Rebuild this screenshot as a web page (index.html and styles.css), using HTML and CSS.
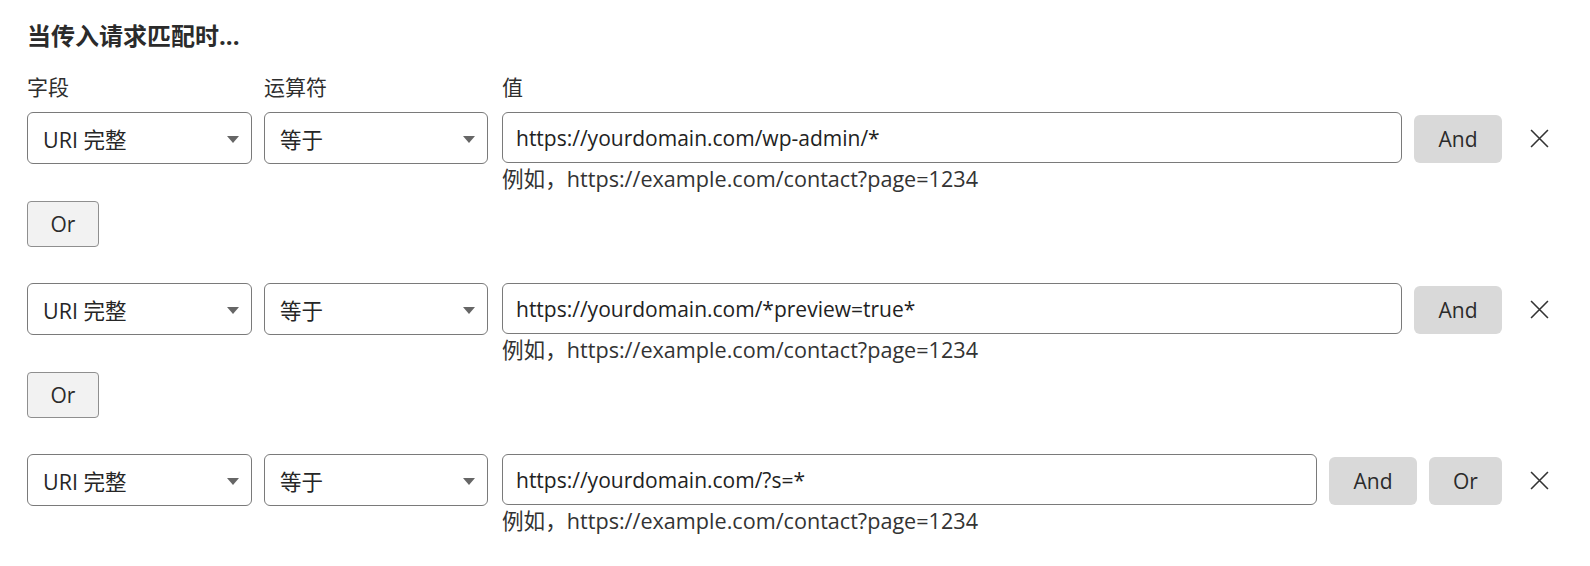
FILE: index.html
```html
<!DOCTYPE html>
<html lang="zh-CN">
<head>
<meta charset="utf-8">
<title>当传入请求匹配时</title>
<link rel="stylesheet" href="styles.css">
</head>
<body>
<div class="page">
  <h2 class="title">当传入请求匹配时...</h2>

  <div class="group">
    <div class="label">字段</div>
    <div class="label">运算符</div>
    <div class="label value-col">值</div>
    <div></div><div></div>

    <div class="select"><span>URI 完整</span><i class="caret"></i></div>
    <div class="select narrow"><span>等于</span><i class="caret"></i></div>
    <div class="input value-col">https://yourdomain.com/wp-admin/*</div>
    <div class="btns"><button class="btn gray and">And</button></div>
    <button class="close" aria-label="删除"><svg viewBox="0 0 18 18" width="19" height="19"><path d="M1 1L17 17M17 1L1 17" stroke="#333" stroke-width="1.5" fill="none"/></svg></button>

    <div class="hint value-col">例如，https://example.com/contact?page=1234</div>
  </div>
  <button class="btn or-btn">Or</button>

  <div class="group">
    <div class="select"><span>URI 完整</span><i class="caret"></i></div>
    <div class="select narrow"><span>等于</span><i class="caret"></i></div>
    <div class="input value-col">https://yourdomain.com/*preview=true*</div>
    <div class="btns"><button class="btn gray and">And</button></div>
    <button class="close" aria-label="删除"><svg viewBox="0 0 18 18" width="19" height="19"><path d="M1 1L17 17M17 1L1 17" stroke="#333" stroke-width="1.5" fill="none"/></svg></button>

    <div class="hint value-col">例如，https://example.com/contact?page=1234</div>
  </div>
  <button class="btn or-btn">Or</button>

  <div class="group">
    <div class="select"><span>URI 完整</span><i class="caret"></i></div>
    <div class="select narrow"><span>等于</span><i class="caret"></i></div>
    <div class="input value-col">https://yourdomain.com/?s=*</div>
    <div class="btns"><button class="btn gray and">And</button><button class="btn gray or">Or</button></div>
    <button class="close" aria-label="删除"><svg viewBox="0 0 18 18" width="19" height="19"><path d="M1 1L17 17M17 1L1 17" stroke="#333" stroke-width="1.5" fill="none"/></svg></button>

    <div class="hint value-col">例如，https://example.com/contact?page=1234</div>
  </div>
</div>
</body>
</html>
```

FILE: styles.css
```css
html, body {
  margin: 0;
  padding: 0;
  background: #ffffff;
}
body {
  font-family: "Open Sans", "Noto Sans CJK SC", sans-serif;
  color: #2e2e2e;
}
.page {
  padding: 21px 26px 0 27px;
}
.title {
  margin: 0;
  font-size: 24px;
  line-height: 30px;
  font-weight: 700;
  color: #2b2b2b;
}
.group {
  display: grid;
  grid-template-columns: 225px 226px 1fr auto 50px;
  column-gap: 12px;
  align-items: start;
}
.title + .group {
  margin-top: 22px;
}
.label {
  font-size: 21px;
  line-height: 28px;
  margin-bottom: 11px;
  color: #2e2e2e;
}
.value-col {
  grid-column: 3;
}
.select {
  box-sizing: border-box;
  height: 52px;
  border: 1px solid #7a7a7a;
  border-radius: 6px;
  display: flex;
  align-items: center;
  justify-content: space-between;
  padding: 0 12px 0 15px;
  font-size: 21.5px;
  color: #262626;
}
.select.narrow {
  width: 224px;
}
.caret {
  width: 0;
  height: 0;
  border-left: 6.5px solid transparent;
  border-right: 6.5px solid transparent;
  border-top: 7px solid #666;
  margin-top: 3px;
}
.input {
  box-sizing: border-box;
  height: 51px;
  border: 1px solid #7a7a7a;
  border-radius: 6px;
  display: flex;
  align-items: center;
  padding: 0 13px;
  font-size: 21px;
  color: #222;
  white-space: nowrap;
}
.btns {
  display: flex;
  gap: 12px;
  margin-top: 3px;
}
.btn {
  font-family: "Open Sans", "Noto Sans CJK SC", sans-serif;
  font-size: 21px;
  color: #2b2b2b;
  border: none;
  padding: 0;
  cursor: pointer;
}
.btn.gray {
  background: #d9d9d9;
  border-radius: 6px;
  height: 48px;
}
.btn.and {
  width: 88px;
}
.btn.or {
  width: 73px;
}
.or-btn {
  display: block;
  box-sizing: border-box;
  width: 72px;
  height: 46px;
  margin: 8px 0 36px;
  background: #f2f2f2;
  border: 1px solid #8f8f8f;
  border-radius: 4px;
}
.close {
  background: none;
  border: none;
  padding: 0;
  height: 52px;
  display: flex;
  align-items: center;
  justify-content: center;
  cursor: pointer;
}
.hint {
  font-size: 21.6px;
  line-height: 28px;
  color: #333;
  margin-top: 1px;
  white-space: nowrap;
}
```
